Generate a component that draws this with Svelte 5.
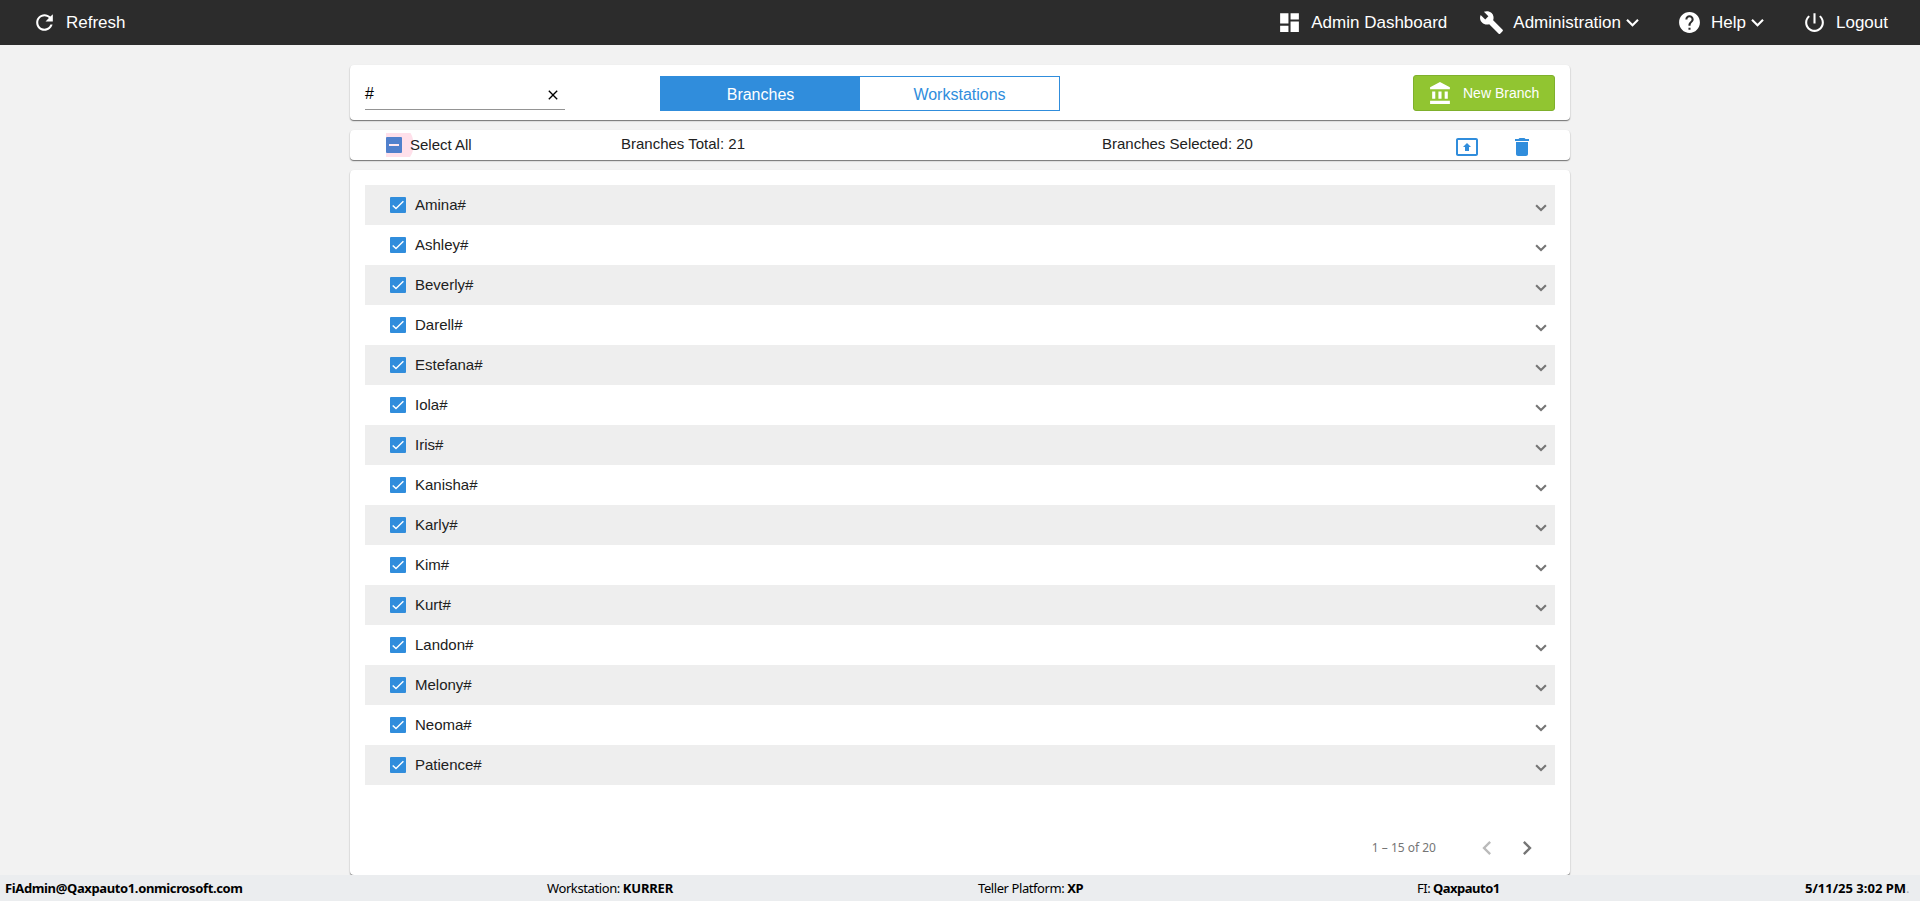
<script>
  const names = ['Amina#', 'Ashley#', 'Beverly#', 'Darell#', 'Estefana#', 'Iola#', 'Iris#', 'Kanisha#', 'Karly#', 'Kim#', 'Kurt#', 'Landon#', 'Melony#', 'Neoma#', 'Patience#'];
  const icons = {
    refresh: 'M17.65 6.35C16.2 4.9 14.21 4 12 4c-4.42 0-7.99 3.58-7.99 8s3.57 8 7.99 8c3.73 0 6.84-2.55 7.73-6h-2.08c-.82 2.33-3.04 4-5.65 4-3.31 0-6-2.69-6-6s2.69-6 6-6c1.66 0 3.14.69 4.22 1.78L13 11h7V4l-2.35 2.35z',
    dashboard: 'M3 13h8V3H3v10zm0 8h8v-6H3v6zm10 0h8V11h-8v10zm0-18v6h8V3h-8z',
    build: 'M22.7 19l-9.1-9.1c.9-2.3.4-5-1.5-6.9-2-2-5-2.4-7.4-1.3L9 6 6 9 1.6 4.7C.4 7.1.9 10.1 2.9 12.1c1.9 1.9 4.6 2.4 6.9 1.5l9.1 9.1c.4.4 1 .4 1.4 0l2.3-2.3c.5-.4.5-1.1.1-1.4z',
    more: 'M16.59 8.59L12 13.17 7.41 8.59 6 10l6 6 6-6z',
    help: 'M12 2C6.48 2 2 6.48 2 12s4.48 10 10 10 10-4.48 10-10S17.52 2 12 2zm1 17h-2v-2h2v2zm2.07-7.75l-.9.92C13.45 12.9 13 13.5 13 15h-2v-.5c0-1.1.45-2.1 1.17-2.83l1.24-1.26c.37-.36.59-.86.59-1.41 0-1.1-.9-2-2-2s-2 .9-2 2H8c0-2.21 1.79-4 4-4s4 1.79 4 4c0 .88-.36 1.68-.93 2.25z',
    power: 'M13 3h-2v10h2V3zm4.83 2.17l-1.42 1.42C17.99 7.86 19 9.81 19 12c0 3.87-3.13 7-7 7s-7-3.13-7-7c0-2.19 1.01-4.14 2.58-5.42L6.17 5.17C4.23 6.82 3 9.26 3 12c0 4.97 4.03 9 9 9s9-4.03 9-9c0-2.74-1.23-5.18-3.17-6.83z',
    bank: 'M4 10v7h3v-7H4zm6 0v7h3v-7h-3zM2 22h19v-3H2v3zm14-12v7h3v-7h-3zm-4.5-9L2 6v2h19V6l-9.5-5z',
    present: 'M21 3H3c-1.11 0-2 .89-2 2v14c0 1.11.89 2 2 2h18c1.11 0 2-.89 2-2V5c0-1.11-.89-2-2-2zm0 16.02H3V4.98h18v14.04zM10 12H8l4-4 4 4h-2v4h-4v-4z',
    trash: 'M6 19c0 1.1.9 2 2 2h8c1.1 0 2-.9 2-2V7H6v12zM19 4h-3.5l-1-1h-5l-1 1H5v2h14V4z',
    close: 'M19 6.41L17.59 5 12 10.59 6.41 5 5 6.41 10.59 12 5 17.59 6.41 19 12 13.41 17.59 19 19 17.59 13.41 12z',
    left: 'M15.41 7.41L14 6l-6 6 6 6 1.41-1.41L10.83 12z',
    right: 'M10 6L8.59 7.41 13.17 12l-4.58 4.59L10 18l6-6z'
  };
</script>

{#snippet icon(name, size)}
  <svg width={size} height={size} viewBox="0 0 24 24" fill="currentColor" aria-hidden="true"><path d={icons[name]} /></svg>
{/snippet}

<div class="page">
  <header>
    <a class="refresh">{@render icon('refresh', 25)}<span>Refresh</span></a>
    <nav>
      <a class="dash">{@render icon('dashboard', 25)}<span>Admin Dashboard</span></a>
      <a class="admin">{@render icon('build', 25)}<span>Administration</span>{@render icon('more', 25)}</a>
      <a class="help">{@render icon('help', 25)}<span>Help</span>{@render icon('more', 25)}</a>
      <a class="logout">{@render icon('power', 25)}<span>Logout</span></a>
    </nav>
  </header>

  <main>
    <section class="card toolbar">
      <div class="search"><span>#</span>{@render icon('close', 16)}</div>
      <div class="tabs"><div class="tab active">Branches</div><div class="tab">Workstations</div></div>
      <button>{@render icon('bank', 25)}<span>New Branch</span></button>
    </section>

    <section class="card summary">
      <div class="all">
        <svg width="28" height="24" viewBox="0 0 28 24" aria-hidden="true">
          <path d="M0 0H24.5Q27.5 5 27.5 12T24 24H0z" fill="#ffe0ea" />
          <rect y="4" width="16" height="16" rx="1" fill="#5080cc" />
          <path d="M3 12H13" stroke="#ffe8f0" stroke-width="2" />
        </svg>
        <span>Select All</span>
      </div>
      <span class="total">Branches Total: 21</span>
      <span class="selected">Branches Selected: 20</span>
      <div class="actions">{@render icon('present', 24)}{@render icon('trash', 24)}</div>
    </section>

    <section class="card list">
      {#each names as name}
        <div class="row">
          <svg width="16" height="16" viewBox="0 0 16 16" fill="none" aria-hidden="true"><rect width="16" height="16" rx="1" fill="#308ddc" /><path d="M2.7 8.4L6 11.6 13.4 4.2" stroke="#fff" stroke-width="1.4" /></svg>
          <span>{name}</span>
          <svg class="chev" width="12" height="8" viewBox="0 0 12 8" fill="none" aria-hidden="true"><path d="M1.1 1.2L6 6.1 10.9 1.2" stroke="#757575" stroke-width="2.1" /></svg>
        </div>
      {/each}
      <div class="pager"><span>1 – 15 of 20</span><i class="off">{@render icon('left', 28)}</i><i>{@render icon('right', 28)}</i></div>
    </section>
  </main>

  <footer>
    <b class="user">FiAdmin@Qaxpauto1.onmicrosoft.com</b>
    <span class="station">Workstation: <b>KURRER</b></span>
    <span class="platform">Teller Platform: <b>XP</b></span>
    <span class="fi">FI: <b>Qaxpauto1</b></span>
    <span class="date"><b>5/11/25 3:02 PM</b><em>.</em></span>
  </footer>
</div>

<style>
  :global(body) { margin: 0; background: #f2f2f2; }
  .page { display: grid; grid-template-rows: 45px 830px 26px; height: 901px; overflow: hidden; background: #f2f2f2; font-family: "Liberation Sans", Arial, sans-serif; color: #212121; }
  svg { display: block; flex: none; }
  header { display: flex; justify-content: space-between; background: #2c2c2c; color: #fff; font-size: 17px; line-height: 45px; }
  header a, nav { display: flex; align-items: center; white-space: nowrap; }
  .refresh { padding-left: 32px; }
  .refresh span { margin-left: 9px; }
  nav { padding-right: 32px; }
  .dash span { margin-left: 9px; }
  .admin { margin-left: 32px; }
  .admin span { margin-left: 9px; }
  .help { margin-left: 31px; }
  .help span { margin-left: 9px; }
  .logout { margin-left: 31px; }
  .logout span { margin-left: 9px; }
  .admin svg:last-child, .help svg:last-child { margin-left: -1px; margin-right: 1px; }

  main { width: 1220px; margin: 0 auto; padding-top: 20px; display: flex; flex-direction: column; gap: 10px; }
  .card { box-sizing: border-box; background: #fff; border-radius: 4px; box-shadow: 0 1px 1px rgba(0, 0, 0, .45), 0 1px 2px rgba(0, 0, 0, .15); padding: 0 15px; }
  .toolbar { height: 55px; display: grid; grid-template-columns: 200px 400px 142px; column-gap: 95px; justify-content: start; }
  .search { height: 44px; display: flex; align-items: center; justify-content: space-between; border-bottom: 1px solid #949494; font-size: 16px; color: #000; padding-right: 4px; width: 196px; }
  .search svg { margin-top: 16px; }
  .search span { margin-top: 13px; }
  .tabs { display: grid; grid-template-columns: 199px 199px; height: 35px; margin-top: 11px; box-sizing: border-box; border: 1px solid #308ddc; }
  .tab { text-align: center; font-size: 16px; line-height: 36px; height: 33px; color: #308ddc; }
  .tab.active { background: #308ddc; color: #fff; }
  .toolbar button { display: flex; align-items: center; width: 142px; height: 36px; margin: 10px 0 0 258px; padding: 0 0 0 14px; border: 1px solid #7fb02c; border-radius: 3px; background: #91c531; color: #fff; font: 14px "Liberation Sans", Arial, sans-serif; white-space: nowrap; }
  .toolbar button svg { margin-top: 1px; }
  .toolbar button span { margin-left: 10px; }

  .summary { height: 30px; display: grid; grid-template-columns: 235px 481px 353px 1fr; padding-left: 36px; font-size: 15px; line-height: 28px; }
  .all { display: flex; align-items: center; line-height: 30px; }
  .all span { margin-left: -4px; }
  .actions { display: flex; gap: 31px; color: #308ddc; padding-top: 5px; height: 24px; }

  .list { height: 705px; padding-top: 15px; }
  .row { height: 40px; display: flex; align-items: center; padding: 0 8px 0 25px; font-size: 15px; }
  .row:nth-child(odd) { background: #eee; }
  .row span { margin: -2px 0 0 9px; }
  .chev { margin: 5px 0 0 auto; }
  .pager { display: flex; align-items: center; justify-content: flex-end; height: 40px; margin-top: 43px; padding-right: 14px; color: #757575; font-family: "Noto Sans", sans-serif; font-size: 12px; }
  .pager span { margin: -1px 37px 0 0; }
  .pager i { margin-right: 12px; }
  .pager i:last-child { margin-right: 0; }
  .pager .off { color: #bababa; }

  footer { display: grid; grid-template-columns: 542px 431px 439px 388px 1fr; padding-left: 5px; background: #ebedef; color: #000; font-family: "Noto Sans", sans-serif; font-size: 13px; line-height: 26px; white-space: nowrap; }
  .user { letter-spacing: -.37px; }
  .station { letter-spacing: -.4px; }
  .station b { letter-spacing: -.2px; }
  .platform { letter-spacing: -.42px; }
  .fi { letter-spacing: -.5px; }
  em { color: #aaa; font-style: normal; }
</style>
